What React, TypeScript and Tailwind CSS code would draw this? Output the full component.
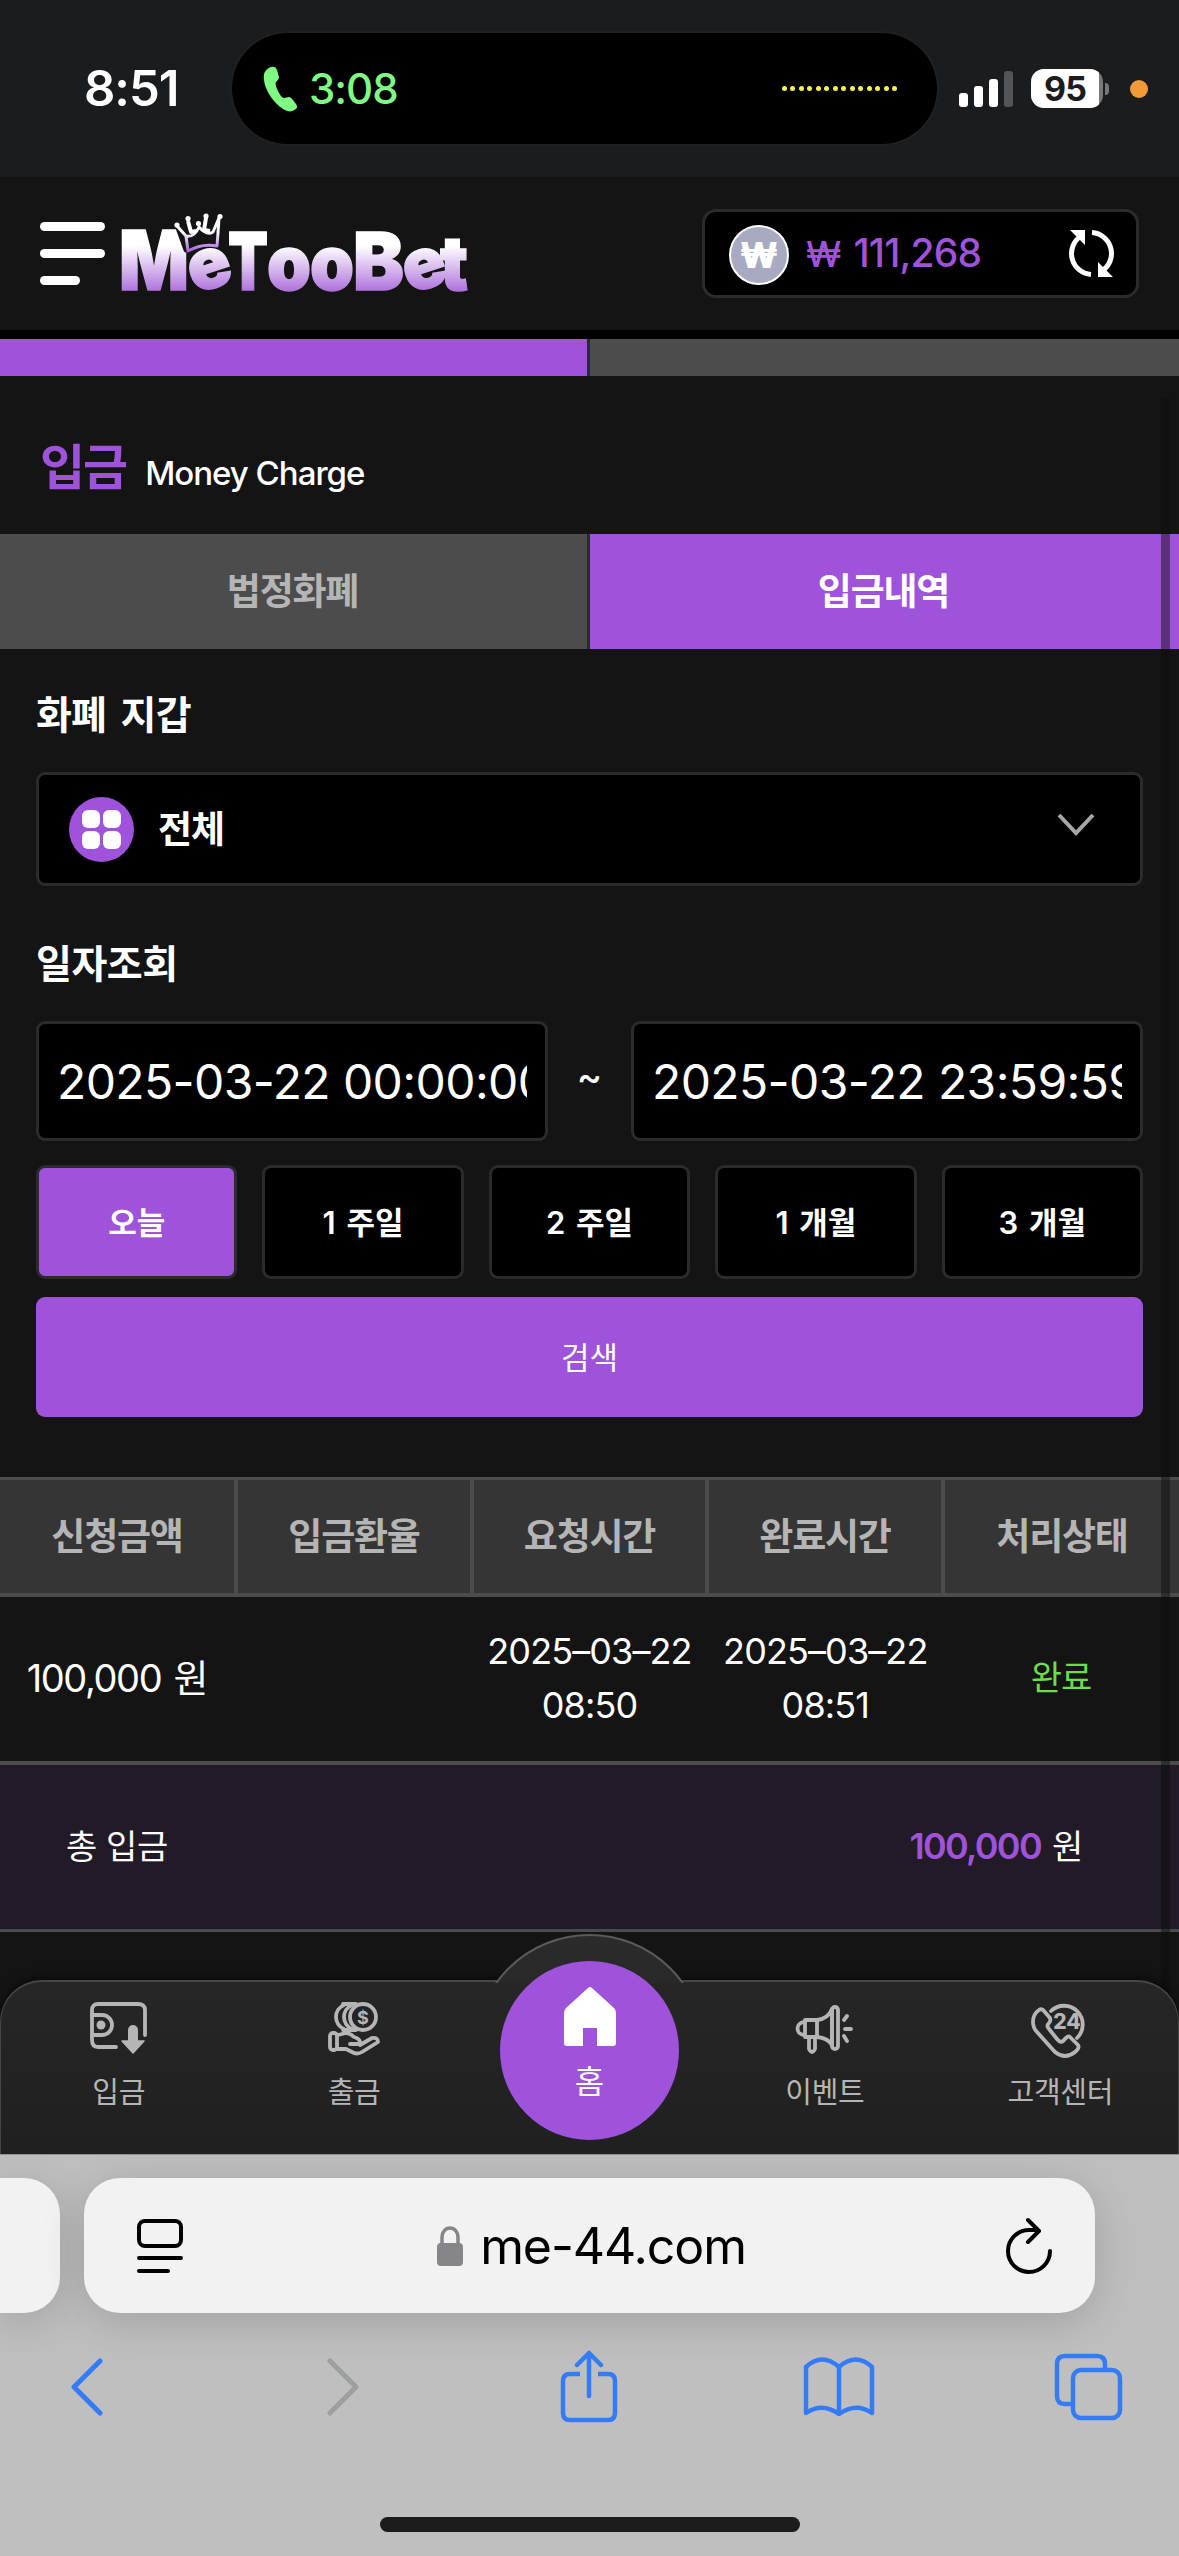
import { ReactNode } from "react";
import clsx from "clsx";

const COLUMNS = ["신청금액", "입금환율", "요청시간", "완료시간", "처리상태"];
const RANGES = ["오늘", "1 주일", "2 주일", "1 개월", "3 개월"];
const SIGNAL = ["h-[14px]", "h-[21px]", "h-[28px]", "h-[36px] opacity-25"];

const StatusBar = () => (
  <div className="h-[177px] shrink-0 bg-[#1b1c1e]">
    <div className="flex items-center h-[177px]">
      <span className="w-[232px] pl-[84px] text-[49px] font-semibold leading-none tracking-[-1px]">
        8:51
      </span>
      <div className="flex items-center w-[705px] h-[111px] rounded-full bg-black pl-[31px] pr-[40px] ring-2 ring-[#1f2022]">
        <svg width="35" height="46" viewBox="0 0 35 46" fill="#7ffb84">
          <path d="M8 1C11 0 13 1 14 4L16 11C16 13 15 14 13 16C12 18 13 21 15 25C17 29 19 32 21 32C23 32 24 31 26 31C28 31 30 34 33 38C35 41 34 43 31 44C27 47 22 45 16 40C8 33 2 23 1 14C0 8 2 3 8 1Z" />
        </svg>
        <span className="ml-[11px] text-[42px] font-medium leading-none tracking-[-1px] text-[#7ffb84]">
          3:08
        </span>
        <div className="ml-auto flex gap-[3.5px]">
          {Array.from({ length: 14 }).map((_, i) => (
            <span key={i} className="w-[5px] h-[5px] rounded-full bg-[#f5f552]" />
          ))}
        </div>
      </div>
      <div className="flex items-end gap-[6px] ml-[22px] h-[36px]">
        {SIGNAL.map((bar) => (
          <span key={bar} className={clsx("w-[9px] rounded-[3px] bg-white", bar)} />
        ))}
      </div>
      <div className="ml-[18px] w-[72px] h-[39px] rounded-[13px] bg-[#77787a] overflow-hidden">
        <div className="w-[68px] h-[39px] bg-white text-center text-[34px] leading-[39px] font-bold tracking-[-1px] text-[#1b1c1e]">
          95
        </div>
      </div>
      <span className="ml-[2px] w-[4px] h-[12px] rounded-r-full bg-[#77787a]" />
      <span className="ml-[21px] w-[18px] h-[18px] rounded-full bg-[#f19a37]" />
    </div>
  </div>
);

const Logo = () => (
  <svg width="352" height="90" viewBox="0 0 352 90" className="ml-[13px] mt-[3px] overflow-visible">
    <defs>
      <linearGradient id="logo" gradientUnits="userSpaceOnUse" x1="0" y1="34" x2="0" y2="84">
        <stop offset="0" stopColor="#ffffff" />
        <stop offset="1" stopColor="#a663d8" />
      </linearGradient>
      <linearGradient id="crown" gradientUnits="userSpaceOnUse" x1="0" y1="20" x2="0" y2="40">
        <stop offset="0" stopColor="#ffffff" />
        <stop offset="1" stopColor="#a15bd9" />
      </linearGradient>
    </defs>
    <text
      y="78"
      fill="url(#logo)"
      stroke="url(#logo)"
      strokeWidth="1.500"
      className="font-['Inter'] font-black"
    >
      <tspan x="-1" fontSize="82" textLength="70" lengthAdjust="spacingAndGlyphs">M</tspan>
      <tspan x="75" y="82" fontSize="71" rotate="-18">e</tspan>
      <tspan x="108" y="78" fontSize="80" textLength="40" lengthAdjust="spacingAndGlyphs">T</tspan>
      <tspan x="147" y="78" fontSize="76" textLength="44" lengthAdjust="spacingAndGlyphs">o</tspan>
      <tspan x="190" y="78" fontSize="76" textLength="44" lengthAdjust="spacingAndGlyphs">o</tspan>
      <tspan x="233" y="78" fontSize="80" textLength="51" lengthAdjust="spacingAndGlyphs">B</tspan>
      <tspan x="290" y="82" fontSize="71" rotate="-18">e</tspan>
      <tspan x="320" y="78" fontSize="76" textLength="28" lengthAdjust="spacingAndGlyphs">t</tspan>
    </text>
    <path
      d="M57 13L66 38Q82 31 98 34L99 6L92 19L85 5L78 21L68 7L67 20Z"
      fill="#141414"
      stroke="#141414"
      strokeWidth="5"
      strokeLinejoin="round"
    />
    <g fill="none" stroke="url(#crown)" strokeWidth="3" strokeLinejoin="round">
      <path d="M57 14L66 24L68 39Q82 31 97 34L98 21L99 6L93 20Q87 24 79 15Q74 26 66 24" />
      <path d="M68 9L71 20L76 19M86 6L84 18L90 19" strokeWidth="4" />
    </g>
    <g fill="#fff">
      <circle cx="57" cy="13" r="2.6" />
      <circle cx="68" cy="6.5" r="2.6" />
      <circle cx="78.5" cy="11.5" r="2.6" />
      <circle cx="86" cy="4" r="2.6" />
      <circle cx="100" cy="4.5" r="2.6" />
    </g>
  </svg>
);

const Header = () => (
  <header className="flex items-start h-[162px] shrink-0 border-b-[9px] border-black bg-[#141414] pt-[32px] px-[40px]">
    <button className="flex flex-col gap-[18px] mt-[13px] w-[67px]">
      <span className="w-[65px] h-[9px] rounded-full bg-white" />
      <span className="w-[65px] h-[9px] rounded-full bg-white" />
      <span className="w-[40px] h-[9px] rounded-full bg-white" />
    </button>
    <Logo />
    <div className="ml-auto flex items-center w-[437px] h-[89px] rounded-[14px] border-[3px] border-[#2b2b2b] bg-black pl-[24px] pr-[20px]">
      <span className="flex items-center justify-center w-[60px] h-[60px] mt-[3px] rounded-full border-[2px] border-white bg-[#a7aac1] text-[35px] leading-none font-black">
        ₩
      </span>
      <div className="ml-[17px] -mt-[2px] flex items-baseline gap-[12px] leading-none font-medium text-[#9f52da]">
        <span className="text-[36px]">₩</span>
        <span className="text-[39px] tracking-[-0.8px]">111,268</span>
      </div>
      <svg width="49" height="49" viewBox="0 0 49 49" className="ml-auto">
        <path d="M25 3.500A21 21 0 0 1 35 42M24 45.500A21 21 0 0 1 14 7" fill="none" stroke="#fff" strokeWidth="5" />
        <path d="M3 1H18V16ZM31 33V48H46Z" fill="#fff" />
      </svg>
    </div>
  </header>
);

const DateField = ({ value }: { value: string }) => (
  <div className="w-[512px] h-[120px] rounded-[9px] border-[3px] border-[#2b2b2b] bg-black px-[18px]">
    <div className="overflow-hidden whitespace-nowrap text-[48px] leading-[115px] tracking-[-0.6px]">
      {value}
    </div>
  </div>
);

const SearchForm = () => (
  <section className="px-[36px]">
    <h2 className="mt-[35px] text-[39px] leading-[62px] font-bold tracking-[-0.8px] [word-spacing:6px]">
      화폐 지갑
    </h2>
    <div className="mt-[26px] flex items-center h-[114px] rounded-[9px] border-[3px] border-[#2b2b2b] bg-black pl-[30px] pr-[45px]">
      <span className="grid grid-cols-[18px_18px] gap-[3px] content-center justify-center w-[65px] h-[65px] rounded-full bg-[#9f52da]">
        {[0, 1, 2, 3].map((i) => (
          <span key={i} className="h-[18px] rounded-[6px] bg-white" />
        ))}
      </span>
      <span className="ml-[24px] text-[37px] leading-none font-bold tracking-[-1px]">전체</span>
      <svg width="38" height="24" viewBox="0 0 38 24" className="ml-auto -mt-[8px]">
        <path d="M2 2L19 20L36 2" fill="none" stroke="#a6a6a6" strokeWidth="4" />
      </svg>
    </div>
    <h2 className="mt-[47px] text-[39px] leading-[62px] font-bold tracking-[-0.5px]">일자조회</h2>
    <div className="mt-[26px] flex items-center justify-between">
      <DateField value="2025-03-22 00:00:00" />
      <span className="text-[38px] leading-none font-medium -mt-[10px]">~</span>
      <DateField value="2025-03-22 23:59:59" />
    </div>
    <div className="mt-[24px] grid grid-cols-5 gap-[25px]">
      {RANGES.map((label, i) => (
        <button
          key={label}
          className={clsx(
            "h-[114px] rounded-[9px] border-[3px] border-[#2b2b2b] text-[31px] leading-none font-semibold [word-spacing:3px]",
            i === 0 ? "bg-[#9f52da]" : "bg-black"
          )}
        >
          {label}
        </button>
      ))}
    </div>
    <button className="mt-[18px] w-full h-[120px] rounded-[9px] bg-[#9f52da] text-[31px] leading-none">
      검색
    </button>
  </section>
);

const HistoryTable = () => (
  <section className="mt-[60px]">
    <div className="grid grid-cols-[238px_236px_235px_236px_1fr] h-[120px] border-t-[3px] border-b-[4px] border-[#4c4c4c] bg-[#353535]">
      {COLUMNS.map((label, i) => (
        <span
          key={label}
          className={clsx(
            "flex items-center justify-center text-[37px] font-semibold tracking-[-1.2px] text-[#b5b5b5]",
            i < 4 && "border-r-[4px] border-[#4c4c4c]"
          )}
        >
          {label}
        </span>
      ))}
    </div>
    <div className="grid grid-cols-5 items-center h-[168px] border-b-[4px] border-[#4c4c4c] pb-[2px] text-center text-[36px] leading-[54px] tracking-[-0.9px]">
      <span className="pr-[2px] text-[38px] tracking-[-1.4px] [word-spacing:3px]">100,000 원</span>
      <span />
      <span>2025–03–22<br />08:50</span>
      <span>2025–03–22<br />08:51</span>
      <span className="text-[34px] text-[#6ddb4a]">완료</span>
    </div>
    <div className="flex items-center justify-between h-[167px] border-b-[3px] border-[#4c4c4c] bg-[#221a27] pl-[66px] pr-[96px] pb-[2px] text-[34px] tracking-[-0.4px]">
      <span>총 입금</span>
      <span className="[word-spacing:2px]">
        <b className="text-[36px] font-semibold tracking-[-1.7px] text-[#9f52da]">100,000</b> 원
      </span>
    </div>
  </section>
);

const NavItem = ({ label, children }: { label: string; children: ReactNode }) => (
  <button className="flex flex-col items-center pt-[15px] text-[#b5b5b5]">
    <svg
      width="62"
      height="62"
      viewBox="0 0 62 62"
      fill="none"
      stroke="currentColor"
      strokeWidth="3.800"
      strokeLinecap="round"
      strokeLinejoin="round"
    >
      {children}
    </svg>
    <span className="mt-[13px] text-[29px] leading-[42px] tracking-[-0.3px]">{label}</span>
  </button>
);

const BottomNav = () => (
  <nav className="absolute inset-x-0 bottom-0 h-[174px]">
    <div className="grid grid-cols-5 h-[174px] rounded-t-[42px] border-t-2 border-x border-[#464646] bg-linear-to-b from-[#262626] to-[#202020] shadow-[0_-3px_9px_rgba(0,0,0,0.5)]">
      <NavItem label="입금">
        <path d="M57 38V13Q57 7 50 7H10Q4 7 4 13V43Q4 50 10 50H28" />
        <path d="M4 18H14A10 10 0 0 1 14 38H4" />
        <circle cx="13" cy="28" r="4.500" fill="currentColor" stroke="none" />
        <path d="M45 33V44" strokeWidth="10" />
        <path d="M34 44H56L45 56Z" fill="currentColor" strokeWidth="1.500" />
      </NavItem>
      <NavItem label="출금">
        <circle cx="40" cy="20" r="13" />
        <path d="M29 8A13 13 0 0 0 29 32M21 8A13 13 0 0 0 21 32M20 7H33M20 33H33" />
        <text x="40" y="27" textAnchor="middle" fontSize="18" fill="currentColor" stroke="none" className="font-bold">
          $
        </text>
        <rect x="7" y="36" width="7" height="17" rx="3" />
        <path d="M15 38L23 36Q27 36 31 40Q38 42 37 47H27M37 48L49 41Q55 40 55 45L39 55Q34 58 29 55L23 52H15" />
      </NavItem>
      <span />
      <NavItem label="이벤트">
        <path d="M11 23H23Q34 22 38 12V48Q34 41 23 40H11Z" />
        <rect x="38" y="10" width="6" height="42" rx="3" />
        <path d="M23 23V40M11 25C1 25 1 38 11 38M15 40V52Q18 58 21 52V40M50 23L53 19M51 32H57M50 39L53 44" />
      </NavItem>
      <NavItem label="고객센터">
        <path d="M22 14A18 18 0 1 1 48 41" />
        <path d="M21 21L15 14Q13 11 10 13Q4 17 4 25Q4 31 8 35L26 55Q36 63 46 55Q51 51 49 48L41 40Q39 38 35 43Q32 47 28 42L20 32Q17 29 20 26Q22 24 21 21Z" />
        <text x="38" y="32" textAnchor="middle" fontSize="21" fill="currentColor" stroke="none" className="font-extrabold">
          24
        </text>
      </NavItem>
    </div>
    {/* raised hump behind the home button */}
    <div className="absolute left-[474px] -top-[46px] w-[231px] h-[49px] overflow-hidden">
      <div className="w-[231px] h-[231px] rounded-full border-2 border-[#5a5a5a] bg-linear-to-b from-[#2b2b2b] to-[#202020]" />
    </div>
    <button className="absolute left-[500px] -top-[19px] flex flex-col items-center w-[179px] h-[179px] rounded-full bg-[#9f52da] pt-[26px]">
      <svg width="52" height="59" viewBox="0 0 52 59" fill="#fff">
        <path d="M24 1Q26 -1 28 1L50 21Q52 23 52 26V56Q52 59 49 59H33V41H19V59H3Q0 59 0 56V26Q0 23 2 21Z" />
      </svg>
      <span className="mt-[14px] text-[32px] leading-[44px]">홈</span>
    </button>
  </nav>
);

const BrowserChrome = () => (
  <footer className="h-[402px] shrink-0 overflow-hidden border-t border-[#929292] bg-[#bfbfbf] pt-[23px] text-black">
    <div className="flex gap-[24px]">
      <div className="w-[60px] h-[135px] rounded-r-[36px] bg-[#f2f2f2] shadow-[0_8px_45px_rgba(0,0,0,0.16)]" />
      <div className="flex items-center w-[1011px] h-[135px] rounded-[36px] bg-[#f2f2f2] pl-[52px] pr-[42px] shadow-[0_8px_45px_rgba(0,0,0,0.16)]">
        <svg width="48" height="56" viewBox="0 0 48 56" fill="none" stroke="#000" strokeWidth="4" strokeLinecap="round">
          <rect x="3" y="3" width="42" height="25" rx="6" />
          <path d="M3 40H45M3 53H32" />
        </svg>
        <div className="flex items-center mx-auto pr-[7px]">
          <svg width="28" height="40" viewBox="0 0 28 40">
            <path d="M6 20V11A8 9 0 0 1 22 11V20" fill="none" stroke="#868688" strokeWidth="3.500" />
            <rect x="1" y="17" width="26" height="23" rx="4" fill="#868688" />
          </svg>
          <span className="ml-[16px] text-[50px] leading-none tracking-[-1.1px]">me-44.com</span>
        </div>
        <svg width="48" height="58" viewBox="0 0 48 58" fill="none" stroke="#000" strokeWidth="4" strokeLinecap="round" strokeLinejoin="round">
          <path d="M45 34A21 21 0 1 1 24 13H33M23 3L34 14L23 25" />
        </svg>
      </div>
    </div>
    <div className="mt-[36px] flex items-center h-[76px] pl-[69px] pr-[56px]">
      <svg width="35" height="58" viewBox="0 0 35 58" fill="none" stroke="#347bf8" strokeWidth="5" strokeLinecap="round" strokeLinejoin="round">
        <path d="M31 3L5 29L31 55" />
      </svg>
      <svg width="35" height="58" viewBox="0 0 35 58" fill="none" stroke="#9e9f9f" strokeWidth="5" strokeLinecap="round" strokeLinejoin="round" className="ml-[222px]">
        <path d="M4 3L30 29L4 55" />
      </svg>
      <svg width="60" height="74" viewBox="0 0 60 74" fill="none" stroke="#347bf8" strokeWidth="4.500" strokeLinecap="round" strokeLinejoin="round" className="ml-[198px]">
        <path d="M21 24H11Q4 24 4 31V63Q4 70 11 70H49Q56 70 56 63V31Q56 24 49 24H39" strokeLinecap="butt" />
        <path d="M30 46V4M18 15L30 3L42 15" />
      </svg>
      <svg width="74" height="62" viewBox="0 0 74 62" fill="none" stroke="#347bf8" strokeWidth="4.500" strokeLinecap="round" strokeLinejoin="round" className="ml-[183px]">
        <path d="M37 11Q20 -4 4 11V57Q20 46 37 58Q54 46 70 57V11Q54 -4 37 11ZM37 11V58" />
      </svg>
      <svg width="69" height="68" viewBox="0 0 69 68" fill="none" stroke="#347bf8" strokeWidth="4.500" className="ml-auto">
        <rect x="19" y="17" width="47" height="48" rx="8" />
        <path d="M51 17V11Q51 3 43 3H11Q3 3 3 11V43Q3 51 11 51H19" />
      </svg>
    </div>
    <div className="mt-[92px] mx-auto w-[420px] h-[15px] rounded-full bg-[#1c1c1c]" />
  </footer>
);

export default function App() {
  return (
    <div className="flex flex-col w-[1179px] h-[2556px] overflow-hidden bg-[#141414] text-white font-['Inter','Noto_Sans_CJK_KR',sans-serif]">
      <StatusBar />
      <Header />
      <main className="relative flex-1 min-h-0 overflow-hidden">
        <div className="flex gap-[3px] h-[37px] bg-[#2b2b2b]">
          <span className="w-[587px] bg-[#9f52da]" />
          <span className="flex-1 bg-[#4c4c4c]" />
        </div>
        <div className="flex items-baseline h-[158px] pt-[57px] pl-[40px]">
          <h1 className="text-[49px] leading-[70px] font-semibold tracking-[-2px] text-[#9f52da]">입금</h1>
          <span className="ml-[19px] text-[33px] font-medium tracking-[-1px]">Money Charge</span>
        </div>
        <div className="flex gap-[3px] h-[115px] bg-[#2b2b2b] text-[37px] leading-[115px] font-semibold tracking-[-1.2px] text-center">
          <span className="w-[587px] pr-[2px] bg-[#4c4c4c] text-[#b5b5b5]">법정화폐</span>
          <span className="flex-1 pr-[2px] bg-[#9f52da]">입금내역</span>
        </div>
        <SearchForm />
        <HistoryTable />
        <span className="absolute left-[1161px] top-[59px] bottom-0 w-[9px] rounded-full bg-[#0a0a0a]/45" />
        <BottomNav />
      </main>
      <BrowserChrome />
    </div>
  );
}
